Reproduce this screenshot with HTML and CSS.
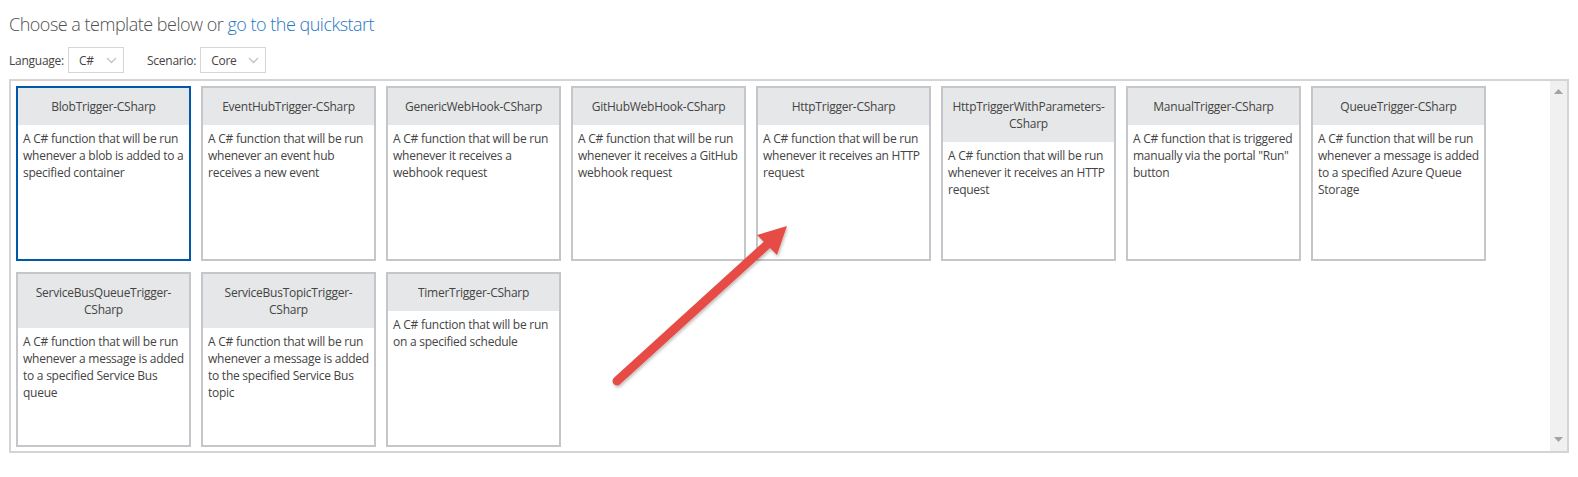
FILE: index.html
```html
<!DOCTYPE html>
<html>
<head>
<meta charset="utf-8">
<link rel="stylesheet" href="styles.css">
</head>
<body>
<div class="page">
  <h1 class="title">Choose a template below or <a class="link" href="#">go to the quickstart</a></h1>
  <div class="filters">
    <span class="flabel">Language:</span>
    <div class="select sel-lang"><span>C#</span><svg class="chev" width="11" height="7" viewBox="0 0 11 7"><path d="M1 1l4.5 4.5L10 1" fill="none" stroke="#c2c2c2" stroke-width="1.3"/></svg></div>
    <span class="flabel scen">Scenario:</span>
    <div class="select sel-scen"><span>Core</span><svg class="chev" width="11" height="7" viewBox="0 0 11 7"><path d="M1 1l4.5 4.5L10 1" fill="none" stroke="#c2c2c2" stroke-width="1.3"/></svg></div>
  </div>
  <div class="panel">
    <div class="grid">
      <div class="card selected"><div class="chead">BlobTrigger-CSharp</div><div class="cdesc">A C# function that will be run whenever a blob is added to a specified container</div></div>
      <div class="card"><div class="chead">EventHubTrigger-CSharp</div><div class="cdesc">A C# function that will be run whenever an event hub receives a new event</div></div>
      <div class="card"><div class="chead">GenericWebHook-CSharp</div><div class="cdesc">A C# function that will be run whenever it receives a webhook request</div></div>
      <div class="card"><div class="chead">GitHubWebHook-CSharp</div><div class="cdesc">A C# function that will be run whenever it receives a GitHub webhook request</div></div>
      <div class="card"><div class="chead">HttpTrigger-CSharp</div><div class="cdesc">A C# function that will be run whenever it receives an HTTP request</div></div>
      <div class="card"><div class="chead">HttpTriggerWithParameters-<br>CSharp</div><div class="cdesc">A C# function that will be run whenever it receives an HTTP request</div></div>
      <div class="card"><div class="chead">ManualTrigger-CSharp</div><div class="cdesc">A C# function that is triggered manually via the portal "Run" button</div></div>
      <div class="card"><div class="chead">QueueTrigger-CSharp</div><div class="cdesc">A C# function that will be run whenever a message is added to a specified Azure Queue Storage</div></div>
      <div class="card"><div class="chead">ServiceBusQueueTrigger-<br>CSharp</div><div class="cdesc">A C# function that will be run whenever a message is added to a specified Service Bus queue</div></div>
      <div class="card"><div class="chead">ServiceBusTopicTrigger-<br>CSharp</div><div class="cdesc">A C# function that will be run whenever a message is added to the specified Service Bus topic</div></div>
      <div class="card"><div class="chead">TimerTrigger-CSharp</div><div class="cdesc">A C# function that will be run on a specified schedule</div></div>
    </div>
    <div class="scrollbar">
      <svg width="9" height="5" viewBox="0 0 9 5"><path d="M0 5L4.5 0L9 5z" fill="#a3a3a3"/></svg>
      <svg width="9" height="5" viewBox="0 0 9 5"><path d="M0 0L4.5 5L9 0z" fill="#a3a3a3"/></svg>
    </div>
  </div>
  <svg class="arrow" width="1578" height="477" viewBox="0 0 1578 477">
    <defs>
      <filter id="sh" x="-20%" y="-20%" width="140%" height="140%">
        <feDropShadow dx="1" dy="2" stdDeviation="1.5" flood-color="#000" flood-opacity="0.25"/>
      </filter>
    </defs>
    <g filter="url(#sh)">
      <line x1="617" y1="381" x2="770" y2="242" stroke="#e64c45" stroke-width="9" stroke-linecap="round"/>
      <path d="M787 226L757 235L777 255z" fill="#e64c45"/>
    </g>
  </svg>
</div>
</body>
</html>
```
FILE: styles.css
```css
html, body {
  margin: 0;
  padding: 0;
  background: #ffffff;
}
body {
  font-family: "Open Sans", "Noto Sans", "Liberation Sans", sans-serif;
  color: #444444;
}
.page {
  position: relative;
  width: 1578px;
  height: 477px;
  padding: 0 9px;
  box-sizing: border-box;
}
.title {
  margin: 0;
  padding-top: 12px;
  font-size: 18px;
  line-height: 24px;
  font-weight: 300;
  color: #505050;
  letter-spacing: -0.5px;
}
.link {
  color: #2878c0;
  text-decoration: none;
}
.filters {
  display: flex;
  align-items: center;
  margin-top: 11px;
  height: 26px;
  letter-spacing: -0.25px;
}
.flabel {
  font-size: 12px;
  color: #444;
  margin-right: 4px;
}
.flabel.scen {
  margin-left: 23px;
  margin-right: 4px;
}
.select {
  display: flex;
  align-items: center;
  justify-content: space-between;
  height: 26px;
  box-sizing: border-box;
  border: 1px solid #d6d6d6;
  padding: 0 6px 0 10px;
  font-size: 12px;
  color: #444;
}
.sel-lang { width: 56px; }
.sel-scen { width: 66px; }
.chev { margin-top: 1px; }
.panel {
  display: flex;
  margin-top: 6px;
  height: 374px;
  box-sizing: border-box;
  border: 2px solid #d4d4d4;
}
.grid {
  flex: 1;
  display: grid;
  grid-template-columns: repeat(8, 175px);
  grid-auto-rows: 175px;
  column-gap: 10px;
  row-gap: 11px;
  padding: 5px;
  align-content: start;
}
.card {
  box-sizing: border-box;
  border: 2px solid #c4c6c9;
  background: #fff;
  display: flex;
  flex-direction: column;
  letter-spacing: -0.25px;
}
.card.selected {
  border-color: #0058a8;
}
.chead {
  background: #e6e7e8;
  text-align: center;
  font-size: 12px;
  line-height: 17px;
  padding: 10px 4px;
  color: #444;
}
.cdesc {
  font-size: 12px;
  line-height: 17px;
  padding: 5px 4px 5px 5px;
  color: #444;
}
.scrollbar {
  width: 17px;
  background: #f0f0f0;
  display: flex;
  flex-direction: column;
  justify-content: space-between;
  align-items: center;
  padding: 8px 0 9px;
  box-sizing: border-box;
}
.arrow {
  position: absolute;
  left: 0;
  top: 0;
  pointer-events: none;
}
```
